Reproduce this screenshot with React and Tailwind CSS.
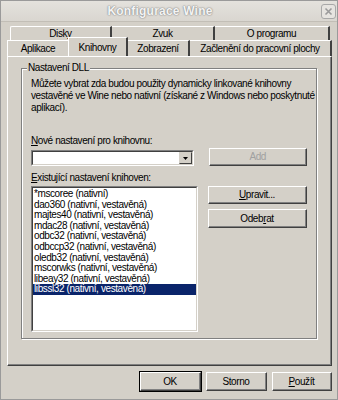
import React from "react";

const items = [
  "*mscoree (nativní)",
  "dao360 (nativní, vestavěná)",
  "majtes40 (nativní, vestavěná)",
  "mdac28 (nativní, vestavěná)",
  "odbc32 (nativní, vestavěná)",
  "odbccp32 (nativní, vestavěná)",
  "oledb32 (nativní, vestavěná)",
  "mscorwks (nativní, vestavěná)",
  "libeay32 (nativní, vestavěná)",
  "libssl32 (nativní, vestavěná)",
];

function Btn({ children, className = "", disabled = false, def = false }) {
  return (
    <div
      className={
        "flex items-center justify-center border border-t-white border-l-white border-r-[#404040] border-b-[#404040] " +
        (def ? "outline outline-1 outline-black " : "") +
        className
      }
    >
      <div className="flex h-full w-full items-center justify-center border-r border-b border-[#808080]">
        <span className={disabled ? "text-[#a0a0a0]" : "text-black"}>{children}</span>
      </div>
    </div>
  );
}

export default function App() {
  return (
    <div
      className="relative flex h-[400px] w-[338px] flex-col overflow-hidden border border-[#9a9a9a] bg-[#d4d0c8] text-[10px] tracking-[-0.4px] text-black"
      style={{ fontFamily: "'Liberation Sans', Arial, sans-serif" }}
    >
      {/* Title bar */}
      <div className="relative flex h-[21px] items-center justify-center border-b border-[#c2beb6] bg-gradient-to-b from-[#e4e2dd] to-[#d9d6d0] pr-[18px]">
        <span
          className="text-[12px] font-bold tracking-[0.2px] text-[#f4f4f4]"
          style={{ textShadow: "0 0 2px #8a8a8a, 0 0 1px #777" }}
        >
          Konfigurace Wine
        </span>
        <div className="absolute right-[1px] top-[3px] flex h-[15px] w-[15px] items-center justify-center rounded-[3px] border border-[#a8a8a8] bg-[#e6e4e0]">
          <svg width="9" height="9" viewBox="0 0 9 9">
            <path d="M1.5 1.5 L7.5 7.5 M7.5 1.5 L1.5 7.5" stroke="#9a9a9a" strokeWidth="1.6" />
          </svg>
        </div>
      </div>

      {/* Body */}
      <div className="flex flex-1 flex-col pl-[6px] pr-[5px]">
        {/* Tab row 1 */}
        <div className="ml-[3px] mt-[4px] flex h-[14px]">
          <div className="flex w-[102px] items-center justify-center rounded-tl-[2px] border-l border-t border-white border-r-[2px] border-r-[#404040]">Disky</div>
          <div className="flex w-[103px] items-center justify-center border-t border-white border-r-[2px] border-r-[#404040]">Zvuk</div>
          <div className="flex w-[115px] items-center justify-center border-t border-white border-r-[2px] border-r-[#404040]">O programu</div>
        </div>
        {/* Tab row 2 */}
        <div className="relative z-10 flex h-[16px] items-end">
          <div className="flex h-[16px] w-[61px] items-center justify-center border-l border-t border-white">Aplikace</div>
          <div className="-mt-[2px] flex h-[19px] w-[60px] items-start justify-center border-l border-t border-white border-r-[2px] border-r-[#404040] bg-[#d4d0c8] pt-[2px]">Knihovny</div>
          <div className="flex h-[16px] w-[62px] items-center justify-center border-t border-white border-r-[2px] border-r-[#404040]">Zobrazení</div>
          <div className="flex h-[16px] w-[142px] items-center justify-center border-t border-white border-r-[2px] border-r-[#404040]">Začlenění do pracovní plochy</div>
        </div>

        {/* Panel */}
        <div className="flex h-[310px] flex-col border-l border-t border-white border-r border-b border-r-[#404040] border-b-[#404040]">
          <div className="flex flex-1 flex-col border-r border-b border-[#808080] px-[13px] pb-[25px] pt-[11px]">
            {/* Group box */}
            <div className="relative flex flex-1 flex-col border border-[#808080] px-[9px] pt-[9px] shadow-[inset_1px_1px_0_#fff,1px_1px_0_#fff]">
              <span className="absolute -top-[7px] left-[5px] bg-[#d4d0c8] px-[1px] leading-[12px]">Nastavení DLL</span>
              <p className="whitespace-nowrap leading-[12px]">
                Můžete vybrat zda budou použity dynamicky linkované knihovny
                <br />
                vestavěné ve Wine nebo nativní (získané z Windows nebo poskytnuté
                <br />
                aplikací).
              </p>

              <div className="mt-[21px] leading-[12px]">
                <u>N</u>ové nastavení pro knihovnu:
              </div>
              <div className="mt-[3px] flex items-start gap-[15px]">
                <div className="flex h-[16px] w-[166px] border border-t-[#808080] border-l-[#808080] border-r-white border-b-white">
                  <div className="flex flex-1 border border-t-[#404040] border-l-[#404040] border-r-[#d4d0c8] border-b-[#d4d0c8] bg-white">
                    <div className="flex-1" />
                    <div className="flex w-[13px] items-center justify-center border border-t-[#d4d0c8] border-l-[#d4d0c8] border-r-[#404040] border-b-[#404040] bg-[#d4d0c8]">
                      <svg width="5" height="3" viewBox="0 0 5 3">
                        <path d="M0 0 H5 L2.5 3 Z" fill="#000" />
                      </svg>
                    </div>
                  </div>
                </div>
                <Btn className="-mt-[2px] h-[18px] w-[99px]" disabled>
                  Add
                </Btn>
              </div>

              <div className="mt-[6px] leading-[12px]">
                <u>E</u>xistující nastavení knihoven:
              </div>
              <div className="mt-[2px] flex gap-[10px]">
                <div className="h-[146px] w-[171px] border border-t-[#808080] border-l-[#808080] border-r-white border-b-white">
                  <div className="h-full w-full border border-t-[#404040] border-l-[#404040] border-r-[#d4d0c8] border-b-[#d4d0c8] bg-white pt-[1px]">
                    {items.map((t, i) => (
                      <div
                        key={t}
                        className={
                          "h-[10.6px] whitespace-nowrap pl-[1px] leading-[10.6px] " +
                          (i === items.length - 1 ? "bg-[#0a246a] text-white" : "")
                        }
                      >
                        {t}
                      </div>
                    ))}
                  </div>
                </div>
                <div className="flex flex-col gap-[5px]">
                  <Btn className="h-[18px] w-[99px]">
                    <u>U</u>pravit...
                  </Btn>
                  <Btn className="h-[19px] w-[99px]">
                    Odeb<u>r</u>at
                  </Btn>
                </div>
              </div>
            </div>
          </div>
        </div>

        {/* Bottom buttons */}
        <div className="mt-[6px] flex justify-end gap-[5px]">
          <Btn className="h-[19px] w-[61px]" def>
            OK
          </Btn>
          <Btn className="h-[19px] w-[61px]">Storno</Btn>
          <Btn className="h-[19px] w-[60px]">
            <u>P</u>oužít
          </Btn>
        </div>
      </div>
    </div>
  );
}
